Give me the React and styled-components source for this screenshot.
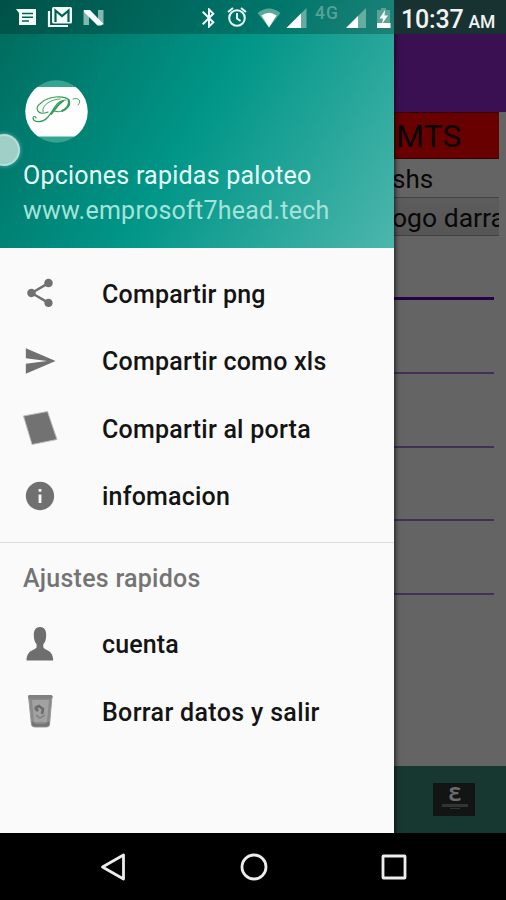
import React from 'react'
import styled, { createGlobalStyle } from 'styled-components'
import { MdShare, MdSend, MdInfo, MdBluetooth } from 'react-icons/md'

const GlobalStyle = createGlobalStyle`
  * { box-sizing: border-box; }
  body {
    margin: 0;
    background: #000;
    font-family: Roboto, "Noto Sans", sans-serif;
  }
`

const Screen = styled.div`
  position: relative;
  display: flex;
  flex-direction: column;
  width: 506px;
  height: 900px;
  overflow: hidden;
  background: #000;
`

const Main = styled.div`
  display: flex;
  height: 833px;
`

/* status bar, drawn over the drawer and the page */
const StatusBar = styled.div`
  position: absolute;
  top: 0;
  left: 0;
  z-index: 3;
  display: flex;
  width: 506px;
  height: 34px;
  color: #f4fffc;
`

const StatusIcons = styled.svg`
  width: 394px;
  height: 34px;
  flex: none;
  background: rgba(0, 0, 0, 0.22);
`

const Clock = styled.div`
  display: flex;
  align-items: baseline;
  width: 112px;
  padding-left: 7px;
  background: #173231;
  line-height: 40px;
  font-size: 25px;
  font-weight: 500;
  letter-spacing: -0.2px;
  white-space: nowrap;
  color: #f2f2f2;
`

const Meridiem = styled.span`
  margin-left: 5px;
  font-size: 17.5px;
  letter-spacing: 0;
`

const Drawer = styled.aside`
  position: relative;
  z-index: 2;
  display: flex;
  flex-direction: column;
  flex: none;
  width: 394px;
  background: #fafafa;
  box-shadow: 0 0 5px 1px rgba(0, 0, 0, 0.75);
`

const Header = styled.header`
  display: flex;
  flex-direction: column;
  height: 248px;
  padding: 80px 0 0 23px;
  background: linear-gradient(122.2deg, #00695c, #009688 50%, #4db6ac);
`

const Avatar = styled.svg`
  width: 64px;
  height: 64px;
  margin-left: 1px;
`

const HeaderText = styled.div`
  height: 35px;
  margin-top: ${props => props.$top || 0}px;
  line-height: 35px;
  font-size: 25px;
  letter-spacing: ${props => props.$spacing}px;
  white-space: nowrap;
  color: ${props => props.$color};
`

const Touch = styled.div`
  position: absolute;
  top: 134px;
  left: -12px;
  width: 32px;
  height: 32px;
  border-radius: 50%;
  border: 2px solid rgba(190, 235, 226, 0.65);
  background: #9fcfc6;
  box-shadow: 0 0 4px rgba(150, 210, 215, 0.7);
`

const Menu = styled.ul`
  margin: 0;
  padding: ${props => props.$pad};
  list-style: none;
`

const Item = styled.li`
  display: flex;
  align-items: center;
  height: 67.5px;
  padding-left: 23px;
  font-size: 25px;
  font-weight: 500;
  letter-spacing: ${props => props.$spacing || 0}px;
  white-space: nowrap;
  color: #141414;

  svg {
    flex: none;
    width: 34px;
    height: 34px;
    margin-right: 45px;
    margin-top: -2px;
    overflow: visible;
    color: #707070;
  }
`

const Section = styled.div`
  height: 69.5px;
  padding-left: 23px;
  border-top: 1.5px solid #dedede;
  line-height: 71px;
  font-size: 25px;
  font-weight: 500;
  letter-spacing: 0.25px;
  color: #747474;
`

const Page = styled.main`
  display: flex;
  flex-direction: column;
  flex: 1;
  min-width: 0;
  overflow: hidden;
  background: #646464;
`

const Toolbar = styled.div`
  height: 112px;
  flex: none;
  background: #3b1053;
`

const Cell = styled.div`
  height: ${props => props.$height}px;
  flex: none;
  margin-right: 7px;
  overflow: hidden;
  border-bottom: 1px solid ${props => props.$line || 'transparent'};
  border-top: 1px solid ${props => props.$line || 'transparent'};
  background: ${props => props.$bg || 'transparent'};
  line-height: ${props => props.$height}px;
  font-size: ${props => props.$size}px;
  white-space: nowrap;
  color: #080808;

  span {
    margin-left: ${props => props.$shift}px;
  }
`

const Fields = styled.div`
  flex: 1;
  padding: 1px 12px 0 0;
`

const Field = styled.div`
  height: ${props => (props.$active ? 63 : 73.8)}px;
  border-bottom: ${props => (props.$active ? '3px solid #270047' : '2px solid #443056')};
`

const BottomBar = styled.div`
  display: flex;
  justify-content: flex-end;
  align-items: center;
  flex: none;
  height: 67px;
  padding-right: 31px;
  background: #173831;
`

const Badge = styled.div`
  display: flex;
  flex-direction: column;
  align-items: center;
  width: 42px;
  height: 33px;
  padding: 1px 0 0 2px;
  background: #131414;
  color: #6b6b6b;
  font-size: 20px;
  font-weight: 700;
  line-height: 20px;
`

const BadgeLine = styled.div`
  width: ${props => props.$width}px;
  height: ${props => props.$thick}px;
  margin-bottom: 1px;
  background: #333;
`

const NavBar = styled.nav`
  display: grid;
  grid-template-columns: repeat(3, 140.5px);
  justify-content: center;
  justify-items: center;
  align-items: center;
  height: 67px;
  padding-left: 1px;
  background: #000;

  svg {
    width: 30px;
    height: 30px;
    fill: none;
    stroke: #ededed;
    stroke-width: 2.8;
    stroke-linejoin: round;
  }
`

const NoteIcon = () => (
  <svg viewBox="0 0 34 34">
    <path d="M.5 5 L24.5 .5 L34 28.5 L9 33.5 Z" fill="#727272" stroke="#bdbdbd" strokeWidth="1" />
  </svg>
)

const PersonIcon = () => (
  <svg viewBox="0 0 34 34">
    <path
      d="M17 0 C21.2 0 23.2 3 23.2 8 C23.2 12.6 22 15.6 20.3 17.3 V20.3 C21.5 23.6 30.2 22.6 30.2 33.4 H3.6 C3.6 22.6 12.4 23.6 13.6 20.3 V17.3 C12 15.6 10.8 12.6 10.8 8 C10.8 3 12.8 0 17 0 Z"
      fill="#6e6e6e"
    />
  </svg>
)

const BinIcon = () => (
  <svg viewBox="0 0 34 34">
    <path d="M5.5 2 L8.5 31 Q9 33 12 33 H23 Q26 33 26.5 31 L29 2 Z" fill="#8a8a8a" stroke="#999" />
    <path d="M9 6 L11 28 H24 L26 6 Z" fill="#a2a2a2" />
    <rect x="5" y="1" width="24.5" height="3.5" rx="1.5" fill="#808080" />
    <path d="M12 14 L16 12 L20 15 L19 20 M12 14 L15 17" fill="none" stroke="#6c6c6c" strokeWidth="2.6" />
    <path d="M22 21 L17 24 L13 21" fill="none" stroke="#868686" strokeWidth="2" />
    <path d="M8.5 27 L9 31 Q9.4 32.6 12 32.6 H23 Q25.6 32.6 26 31 L26.5 27 L22 30 H13 Z" fill="#747474" />
  </svg>
)

const Logo = () => (
  <Avatar viewBox="0 0 64 64">
    <defs>
      <clipPath id="round"><circle cx="32.500" cy="31.500" r="31.200" /></clipPath>
    </defs>
    <g clipPath="url(#round)">
      <rect width="64" height="64" fill="#35a491" />
      <rect y="7" width="64" height="49.500" fill="#fdfefd" />
    </g>
    {/* calligraphic monogram */}
    <g fill="none" stroke="#359c58" strokeLinecap="round">
      <path d="M24 32 C13 36 10 28 17 23 C24 16 40 15 45 20 C48 26 40 34 30 31" strokeWidth="1.1" />
      <path d="M42 20 C32 20 29 32 24 37 C19 43 9 43 9 38 C9 36 12 36 12 38" strokeWidth="1.2" />
      <path d="M39 21 C34 24 31 30 27 34" strokeWidth="2" />
      <path d="M44.500 20 C46 24 43 29 38 31" strokeWidth="1.900" />
      <path d="M19 32 C17 25 28 19 36 19 M49 19 C55 17 58 21 54 25" strokeWidth="0.900" />
    </g>
  </Avatar>
)

const Notifications = () => (
  <StatusIcons viewBox="0 0 394 34">
    {/* message */}
    <path d="M16 9 H36 V25 H19 V13 Z" fill="#f4fffc" />
    <path d="M22 13.5 H33 M22 17.3 H33 M22 21 H29" stroke="#006054" strokeWidth="1.6" />
    {/* mail */}
    <path d="M49 11 V26 H68" fill="none" stroke="#f4fffc" strokeWidth="2.2" />
    <rect x="52" y="7" width="20" height="16.5" rx="1.5" fill="#f4fffc" />
    <path d="M55.5 22 V10.5 L62 16 L68.5 10.5 V22" fill="none" stroke="#006054" strokeWidth="2.2" />
    {/* system update */}
    <path d="M83.500 10 L89 13 V25 H83.500 Z M98 10 H103.500 V25 L98 20 Z" fill="#81b8af" />
    <path d="M84 10 H90 L103.500 24 L101 25.500 H97.500 L84 12 Z" fill="#f4fffc" />
    <MdBluetooth x="197" y="6" size="24" color="#f4fffc" />
    {/* alarm */}
    <g fill="none" stroke="#eafcf8" strokeWidth="2">
      <circle cx="237" cy="18" r="7.800" />
      <path d="M237 13 V18.500 L240.500 21 M228 12 L233 8 M246 12 L241 8" />
    </g>
    {/* wifi */}
    <path d="M257.500 13 Q269 4 280.500 13 L269 27.500 Z" fill="#57a99a" />
    <path d="M261.500 15.500 Q269 10 276.500 15.500 L269 27.500 Z" fill="#fff" />
    {/* signals */}
    <path d="M306.500 8 V28 H286.500 Z" fill="#64ad9f" />
    <path d="M301 13.500 V28 H286.500 Z" fill="#fff" />
    <text x="315" y="19" fontSize="17.500" letterSpacing="1" fill="#54a396" fontFamily="Roboto" fontWeight="500">4G</text>
    <path d="M366 8 V28 H346 Z" fill="#64ad9f" />
    <path d="M358 16 V28 H346 Z" fill="#fff" />
    {/* battery */}
    <path d="M381 8 H386 V10 H390 V28 H377 V10 H381 Z" fill="#5aa497" />
    <rect x="377" y="23" width="13.500" height="5" fill="#fff" />
    <path d="M385 10 L379.500 18.500 H383 L382 24 L388 15.500 H384.500 Z" fill="#fff" />
  </StatusIcons>
)

const App = () => {
  return (
    <Screen>
      <GlobalStyle />
      <StatusBar>
        <Notifications />
        <Clock>10:37<Meridiem>AM</Meridiem></Clock>
      </StatusBar>
      <Main>
        <Drawer>
          <Header>
            <Logo />
            <HeaderText $top={14} $color="#e6fffa" $spacing={0.23}>Opciones rapidas paloteo</HeaderText>
            <HeaderText $color="#a5e3da" $spacing={0.25}>www.emprosoft7head.tech</HeaderText>
          </Header>
          <Touch />
          <Menu $pad="12.5px 0 11px">
            <Item $spacing={0.2}><MdShare />Compartir png</Item>
            <Item $spacing={0.24}><MdSend />Compartir como xls</Item>
            <Item $spacing={0.24}><NoteIcon />Compartir al porta</Item>
            <Item $spacing={0.2}><MdInfo />infomacion</Item>
          </Menu>
          <Section>Ajustes rapidos</Section>
          <Menu $pad="0">
            <Item $spacing={0.15}><PersonIcon />cuenta</Item>
            <Item $spacing={0.34}><BinIcon />Borrar datos y salir</Item>
          </Menu>
        </Drawer>
        <Page>
          <Toolbar />
          <Cell $height={47} $size={32} $bg="#690000" $line="#300" $shift={2}><span>MTS</span></Cell>
          <Cell $height={38} $size={26} $shift={-2}><span>shs</span></Cell>
          <Cell $height={39} $size={26.5} $bg="linear-gradient(#5d5d5d, #555)" $line="#414141" $shift={-2}><span>ogo darra</span></Cell>
          <Fields>
            <Field $active />
            <Field />
            <Field />
            <Field />
            <Field />
          </Fields>
          <BottomBar>
            <Badge>
              Ɛ
              <BadgeLine $width={26} $thick={3} />
              <BadgeLine $width={10} $thick={1} />
            </Badge>
          </BottomBar>
        </Page>
      </Main>
      <NavBar>
        <svg viewBox="0 0 30 30"><path d="M4.500 15 L25.500 3 V27 Z" /></svg>
        <svg viewBox="0 0 30 30"><circle cx="15" cy="15" r="12" /></svg>
        <svg viewBox="0 0 30 30"><rect x="4" y="4" width="22" height="22" rx="0.500" /></svg>
      </NavBar>
    </Screen>
  )
}

export default App
